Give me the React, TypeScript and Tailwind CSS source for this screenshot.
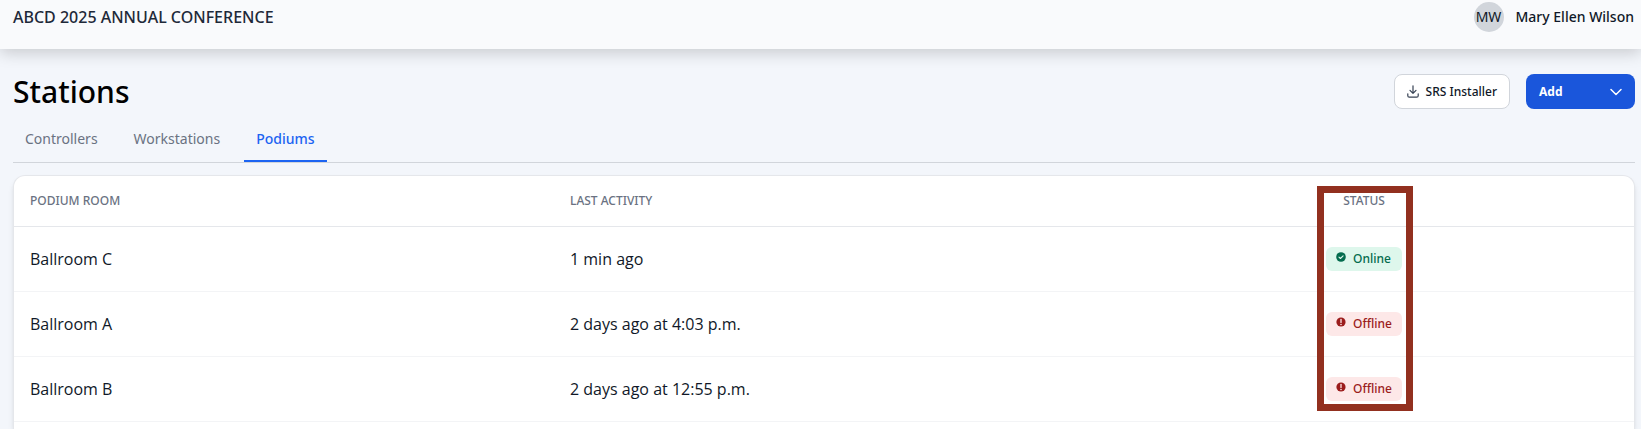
import React, { useState } from 'react';
import clsx from 'clsx';

type Status = 'Online' | 'Offline';

interface Podium {
  room: string;
  lastActivity: string;
  status: Status;
}

const TABS = ['Controllers', 'Workstations', 'Podiums'];

const PODIUMS: Podium[] = [
  { room: 'Ballroom C', lastActivity: '1 min ago', status: 'Online' },
  { room: 'Ballroom A', lastActivity: '2 days ago at 4:03 p.m.', status: 'Offline' },
  { room: 'Ballroom B', lastActivity: '2 days ago at 12:55 p.m.', status: 'Offline' },
];

const CheckIcon: React.FC = () => (
  <svg viewBox="0 0 12 12" className="h-3 w-3" aria-hidden="true">
    <circle cx="6" cy="6" r="4.8" fill="currentColor" />
    <path d="M4 6.200l1.400 1.300L8.100 4.800" fill="none" stroke="#def7ec" strokeWidth="1.1" strokeLinecap="round" strokeLinejoin="round" />
  </svg>
);

const AlertIcon: React.FC = () => (
  <svg viewBox="0 0 12 12" className="h-3 w-3" aria-hidden="true">
    <circle cx="6" cy="6" r="4.600" fill="currentColor" />
    <path d="M6 3.500v2.900" fill="none" stroke="#fde8e8" strokeWidth="1.3" strokeLinecap="round" />
    <circle cx="6" cy="8.500" r="0.800" fill="#fde8e8" />
  </svg>
);

const DownloadIcon: React.FC = () => (
  <svg
    viewBox="0 0 12 13"
    className="h-[13px] w-3 text-gray-700"
    fill="none"
    stroke="currentColor"
    strokeWidth="1.2"
    strokeLinecap="round"
    strokeLinejoin="round"
    aria-hidden="true"
  >
    <path d="M6 .8v7.500M3 5.400l3 3 3-3M.8 8.800v1.900A1.500 1.500 0 0 0 2.300 12.200h7.400a1.500 1.500 0 0 0 1.500-1.500V8.800" />
  </svg>
);

const StatusBadge: React.FC<{ status: Status }> = ({ status }) => {
  const online = status === 'Online';
  return (
    <span
      className={clsx(
        'inline-flex h-6 w-19 items-center gap-1.5 rounded-md pl-[9px] text-xs font-medium',
        online ? 'bg-[#def7ec] text-[#046c4e]' : 'bg-[#fde8e8] text-[#9b1c1c]'
      )}
    >
      <span className="pb-[3px]">{online ? <CheckIcon /> : <AlertIcon />}</span>
      {status}
    </span>
  );
};

const App: React.FC = () => {
  const [activeTab, setActiveTab] = useState('Podiums');

  return (
    <div className="flex min-h-screen flex-col bg-[#f3f6fb] font-['Noto_Sans',sans-serif] text-gray-900">
      <header className="flex justify-between bg-[#f9fafc] pt-0.5 pr-[7px] pb-[17px] pl-[13px] shadow-[0_4px_16px_rgba(0,0,0,0.18)]">
        <div className="flex h-[30px] items-center font-medium text-gray-800">ABCD 2025 ANNUAL CONFERENCE</div>
        <div className="flex items-center gap-3 text-sm font-medium">
          <span className="flex h-[30px] w-[30px] items-center justify-center rounded-full bg-[#d1d5db] font-normal">
            MW
          </span>
          <span>Mary Ellen Wilson</span>
        </div>
      </header>

      <main className="flex flex-1 flex-col pr-1.5 pl-[13px]">
        <div className="flex items-center justify-between pt-[25px]">
          <h1 className="text-3xl leading-[35px] font-medium text-black">Stations</h1>
          <div className="flex gap-4 text-xs font-medium">
            <button
              type="button"
              className="flex h-[35px] items-center gap-[7px] rounded-lg border border-[#d1d5db] bg-white px-3"
            >
              <DownloadIcon />
              SRS Installer
            </button>
            <button
              type="button"
              className="flex h-[35px] w-[109px] items-center justify-between rounded-lg bg-[#1a56db] px-[13px] font-bold text-white"
            >
              Add
              <svg viewBox="0 0 12 8" className="h-2 w-3" fill="none" stroke="currentColor" strokeWidth="1.5" aria-hidden="true">
                <path d="m1 1.500 5 5 5-5" strokeLinecap="round" strokeLinejoin="round" />
              </svg>
            </button>
          </div>
        </div>

        <nav className="mt-2.5 flex gap-3 border-b border-[#d1d5db] text-sm">
          {TABS.map((tab) => (
            <button
              key={tab}
              type="button"
              onClick={() => setActiveTab(tab)}
              className={clsx(
                'h-[43px] border-b-2 px-3 pb-0.5',
                tab === activeTab
                  ? 'border-[#1c64f2] font-medium text-[#1c64f2]'
                  : 'border-transparent text-gray-500'
              )}
            >
              {tab}
            </button>
          ))}
        </nav>

        <div className="mt-3 flex-1 rounded-t-xl border border-b-0 border-gray-200 bg-white shadow-md">
          <table className="w-full table-fixed text-left">
            <thead className="border-b border-gray-200 text-xs text-gray-500 uppercase">
              <tr className="h-[50px]">
                <th className="px-4 font-medium">Podium Room</th>
                <th className="px-4 font-medium">Last Activity</th>
                <th className="relative px-4 text-center font-medium">
                  Status
                  {/* Callout around the status column */}
                  <span className="pointer-events-none absolute top-2.5 left-1/2 -ml-[47px] h-[225px] w-24 border-7 border-[#92301f]" />
                </th>
              </tr>
            </thead>
            <tbody className="font-['Open_Sans',sans-serif]">
              {PODIUMS.map((podium) => (
                <tr key={podium.room} className="h-[65px] border-b border-gray-100">
                  <td className="px-4">{podium.room}</td>
                  <td className="px-4">{podium.lastActivity}</td>
                  <td className="px-4 text-center font-['Noto_Sans',sans-serif]">
                    <div className="flex justify-center">
                      <StatusBadge status={podium.status} />
                    </div>
                  </td>
                </tr>
              ))}
            </tbody>
          </table>
        </div>
      </main>
    </div>
  );
};

export default App;
